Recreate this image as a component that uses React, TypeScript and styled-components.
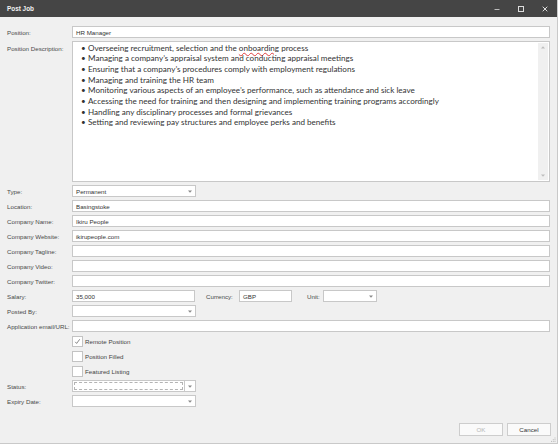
import React from "react";
import styled, { createGlobalStyle } from "styled-components";

const Global = createGlobalStyle`
  html, body { margin: 0; padding: 0; background: #f0f0f0; }
  * { box-sizing: border-box; }
`;

const Window = styled.div`
  width: 558px;
  height: 444px;
  background: #f0f0f0;
  border-right: 1px solid #c9c9c9;
  border-bottom: 1px solid #c9c9c9;
  display: flex;
  flex-direction: column;
  position: relative;
  font-family: "Liberation Sans", Arial, sans-serif;
  overflow: hidden;
`;

const TitleBar = styled.div`
  height: 17px;
  background: #454545;
  display: flex;
  align-items: center;
  padding: 0 0 0 7px;
  flex-shrink: 0;
`;

const Title = styled.div`
  color: #f2f2f2;
  font-weight: bold;
  font-size: 6.4px;
  flex: 1;
`;

const Controls = styled.div`
  display: flex;
  align-items: center;
  height: 100%;
`;

const CtrlBtn = styled.div`
  width: 24px;
  height: 100%;
  display: flex;
  align-items: center;
  justify-content: center;
`;

const Form = styled.div`
  display: grid;
  grid-template-columns: 65px 1fr;
  row-gap: 3px;
  padding: 9px 7px 0 7px;
  align-items: center;
`;

const Label = styled.div<{ $top?: boolean }>`
  font-size: 6.2px;
  color: #4a4a4a;
  align-self: ${(p) => (p.$top ? "start" : "center")};
  padding-top: ${(p) => (p.$top ? "4px" : "0")};
  white-space: nowrap;
`;

const Input = styled.div<{ $w?: number }>`
  height: 12px;
  width: ${(p) => (p.$w ? `${p.$w}px` : "100%")};
  background: #fff;
  border: 1px solid #c8c8c8;
  font-size: 6.2px;
  color: #333;
  display: flex;
  align-items: center;
  padding-left: 3px;
  white-space: nowrap;
`;

const TextArea = styled.div`
  height: 141px;
  background: #fff;
  border: 1px solid #c8c8c8;
  display: flex;
`;

const TextBody = styled.ul`
  flex: 1;
  margin: 0;
  padding: 0.5px 0 0 15px;
  list-style: none;
  font-family: Lato, "Open Sans", sans-serif;
  font-size: 8.1px;
  color: #333;
  line-height: 10.67px;
`;

const Bullet = styled.li`
  position: relative;
  white-space: nowrap;
  &::before {
    content: "•";
    position: absolute;
    left: -7px;
  }
`;

const Spell = styled.span`
  text-decoration: underline wavy #e04040;
  text-decoration-thickness: 0.4px;
  text-underline-offset: 0.5px;
`;

const ScrollBar = styled.div`
  width: 10px;
  background: #f0f0f0;
  margin: 1px;
  display: flex;
  flex-direction: column;
  justify-content: space-between;
  align-items: center;
  padding: 3px 0;
`;

const Combo = styled.div<{ $w: number }>`
  height: 12px;
  width: ${(p) => p.$w}px;
  background: #fff;
  border: 1px solid #c8c8c8;
  font-size: 6.2px;
  color: #333;
  display: flex;
  align-items: center;
  padding-left: 3px;
`;

const ComboText = styled.div`
  flex: 1;
  white-space: nowrap;
`;

const Arrow = styled.div`
  width: 11px;
  display: flex;
  align-items: center;
  justify-content: center;
  height: 100%;
`;

const SplitCombo = styled.div`
  display: flex;
  width: 124px;
  height: 12px;
  border: 1px solid #c8c8c8;
  background: #fff;
`;

const FocusBox = styled.div`
  flex: 1;
  border: 1px dashed #b4b4b4;
  margin: 1px;
`;

const SplitArrow = styled.div`
  width: 11px;
  border-left: 1px solid #c8c8c8;
  display: flex;
  align-items: center;
  justify-content: center;
`;

const Inline = styled.div`
  display: flex;
  align-items: center;
`;

const InlineLabel = styled.div<{ $ml: number; $w: number }>`
  font-size: 6.2px;
  color: #4a4a4a;
  margin-left: ${(p) => p.$ml}px;
  width: ${(p) => p.$w}px;
  white-space: nowrap;
`;

const CheckRow = styled.div`
  display: flex;
  align-items: center;
  height: 12px;
`;

const Box = styled.div`
  width: 11px;
  height: 11px;
  border: 1px solid #c3c3c3;
  background: #fff;
  display: flex;
  align-items: center;
  justify-content: center;
`;

const CheckLabel = styled.div`
  font-size: 6.2px;
  color: #444;
  margin-left: 2px;
`;

const Footer = styled.div`
  margin-top: auto;
  display: flex;
  justify-content: flex-end;
  gap: 4px;
  padding: 0 6px 7px 0;
`;

const Button = styled.div<{ $disabled?: boolean }>`
  width: 44px;
  height: 13px;
  border: 1px solid #cdcdcd;
  background: #fafafa;
  font-size: 6.2px;
  color: ${(p) => (p.$disabled ? "#b5b5b5" : "#333")};
  display: flex;
  align-items: center;
  justify-content: center;
`;

const Grip = styled.div`
  position: absolute;
  right: 1px;
  bottom: 1px;
  display: flex;
`;

const DownArrow = () => (
  <svg width="4" height="3" viewBox="0 0 4 3">
    <path d="M0 0.5h4L2 2.8z" fill="#8a8a8a" />
  </svg>
);

const ScrollUp = () => (
  <svg width="4" height="3" viewBox="0 0 4 3">
    <path d="M0 2.5h4L2 0.2z" fill="#bdbdbd" />
  </svg>
);
const ScrollDown = () => (
  <svg width="4" height="3" viewBox="0 0 4 3">
    <path d="M0 0.5h4L2 2.8z" fill="#bdbdbd" />
  </svg>
);

const Tick = () => (
  <svg width="7" height="7" viewBox="0 0 8 8">
    <path d="M1.4 4.4L3 6.2 6.6 1.4" fill="none" stroke="#555" strokeWidth="0.8" />
  </svg>
);

const bullets: React.ReactNode[] = [
  <>Overseeing recruitment, selection and the <Spell>onboarding</Spell> process</>,
  "Managing a company\u2019s appraisal system and conducting appraisal meetings",
  "Ensuring that a company\u2019s procedures comply with employment regulations",
  "Managing and training the HR team",
  "Monitoring various aspects of an employee\u2019s performance, such as attendance and sick leave",
  "Accessing the need for training and then designing and implementing training programs accordingly",
  "Handling any disciplinary processes and formal grievances",
  "Setting and reviewing pay structures and employee perks and benefits",
];

const textRows: [string, string][] = [
  ["Location:", "Basingstoke"],
  ["Company Name:", "Ikiru People"],
  ["Company Website:", "ikirupeople.com"],
  ["Company Tagline:", ""],
  ["Company Video:", ""],
  ["Company Twitter:", ""],
];

const checks: [string, boolean][] = [
  ["Remote Position", true],
  ["Position Filled", false],
  ["Featured Listing", false],
];

export default function App() {
  return (
    <>
      <Global />
      <Window>
        <TitleBar>
          <Title>Post Job</Title>
          <Controls>
            <CtrlBtn>
              <svg width="6" height="6" viewBox="0 0 6 6">
                <path d="M0.5 3.5h5" stroke="#bbb" strokeWidth="1" />
              </svg>
            </CtrlBtn>
            <CtrlBtn>
              <svg width="6" height="6" viewBox="0 0 6 6">
                <rect x="0.5" y="0.5" width="5" height="5" fill="none" stroke="#ddd" strokeWidth="1" />
              </svg>
            </CtrlBtn>
            <CtrlBtn>
              <svg width="6" height="6" viewBox="0 0 6 6">
                <path d="M0.7 0.7l4.6 4.6M5.3 0.7l-4.6 4.6" stroke="#ddd" strokeWidth="1" />
              </svg>
            </CtrlBtn>
          </Controls>
        </TitleBar>
        <Form>
          <Label>Position:</Label>
          <Input>HR Manager</Input>

          <Label $top>Position Description:</Label>
          <TextArea>
            <TextBody>
              {bullets.map((b, i) => (
                <Bullet key={i}>{b}</Bullet>
              ))}
            </TextBody>
            <ScrollBar>
              <ScrollUp />
              <ScrollDown />
            </ScrollBar>
          </TextArea>

          <Label>Type:</Label>
          <Combo $w={124}>
            <ComboText>Permanent</ComboText>
            <Arrow>
              <DownArrow />
            </Arrow>
          </Combo>

          {textRows.map(([l, v]) => (
            <React.Fragment key={l}>
              <Label>{l}</Label>
              <Input>{v}</Input>
            </React.Fragment>
          ))}

          <Label>Salary:</Label>
          <Inline>
            <Input $w={123}>35,000</Input>
            <InlineLabel $ml={11} $w={33}>Currency:</InlineLabel>
            <Input $w={53}>GBP</Input>
            <InlineLabel $ml={15} $w={16}>Unit:</InlineLabel>
            <Combo $w={54}>
              <ComboText />
              <Arrow>
                <DownArrow />
              </Arrow>
            </Combo>
          </Inline>

          <Label>Posted By:</Label>
          <Combo $w={124}>
            <ComboText />
            <Arrow>
              <DownArrow />
            </Arrow>
          </Combo>

          <Label>Application email/URL:</Label>
          <Input />

          {checks.map(([l, c]) => (
            <React.Fragment key={l}>
              <div />
              <CheckRow>
                <Box>{c && <Tick />}</Box>
                <CheckLabel>{l}</CheckLabel>
              </CheckRow>
            </React.Fragment>
          ))}

          <Label>Status:</Label>
          <SplitCombo>
            <FocusBox />
            <SplitArrow>
              <DownArrow />
            </SplitArrow>
          </SplitCombo>

          <Label>Expiry Date:</Label>
          <Combo $w={124}>
            <ComboText />
            <Arrow>
              <DownArrow />
            </Arrow>
          </Combo>
        </Form>
        <Footer>
          <Button $disabled>OK</Button>
          <Button>Cancel</Button>
        </Footer>
        <Grip>
          <svg width="5" height="5" viewBox="0 0 5 5">
            <rect x="3.5" y="0.5" width="1" height="1" fill="#bbb" />
            <rect x="1.8" y="2.2" width="1" height="1" fill="#bbb" />
            <rect x="3.5" y="2.2" width="1" height="1" fill="#bbb" />
            <rect x="0" y="3.9" width="1" height="1" fill="#bbb" />
            <rect x="1.8" y="3.9" width="1" height="1" fill="#bbb" />
            <rect x="3.5" y="3.9" width="1" height="1" fill="#bbb" />
          </svg>
        </Grip>
      </Window>
    </>
  );
}
